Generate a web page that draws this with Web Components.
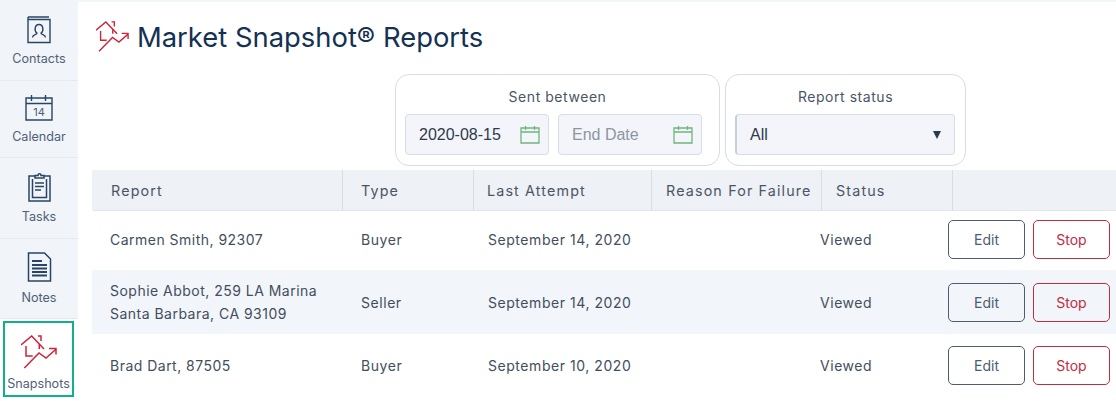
<!DOCTYPE html>
<html>
<head>
<meta charset="utf-8">
<title>Market Snapshot Reports</title>
<style>
    html, body { margin: 0; height: 401px; overflow: hidden; background: #fff; }
    body { font-family: Inter, "Liberation Sans", sans-serif; color: #2e3a4d; }
    #app { display: flex; height: 401px; border-top: 2px solid #f2f5fa; box-sizing: border-box; }
    #main { flex: 1; min-width: 0; padding-left: 14px; }
</style>
</head>
<body>
<div id="app">
    <side-nav>
        <nav-item label="Contacts" icon="contacts" height="79"></nav-item>
        <nav-item label="Calendar" icon="calendar" height="77" low></nav-item>
        <nav-item label="Tasks" icon="tasks" height="81"></nav-item>
        <nav-item label="Notes" icon="notes" height="80" low></nav-item>
        <nav-item label="Snapshots" icon="snapshots" active></nav-item>
    </side-nav>
    <div id="main">
        <page-title>Market Snapshot® Reports</page-title>
        <filter-bar>
            <filter-group label="Sent between" width="325">
                <date-field value="2020-08-15"></date-field>
                <date-field placeholder="End Date"></date-field>
            </filter-group>
            <filter-group label="Report status" width="241">
                <select-field value="All"></select-field>
            </filter-group>
        </filter-bar>
        <report-table>
            <report-row report="Carmen Smith, 92307" type="Buyer" attempt="September 14, 2020" status="Viewed" height="59"></report-row>
            <report-row report="Sophie Abbot, 259 LA Marina&#10;Santa Barbara, CA 93109" type="Seller" attempt="September 14, 2020" status="Viewed" height="64" shaded></report-row>
            <report-row report="Brad Dart, 87505" type="Buyer" attempt="September 10, 2020" status="Viewed" height="63"></report-row>
        </report-table>
    </div>
</div>

<script>
const ICONS = {
    contacts: `<svg width="26" height="28" viewBox="0 0 26 28" fill="none" stroke="#284566" stroke-width="1.4">
        <path d="M2 1h21M2 1v25.500h22V3.500H2"/>
        <path d="M6.500 21.500c0-3 4.500-2.500 4.500-4.500-3-2-2.500-8.500 2-8.500s5 6.500 2 8.500c0 2 4.500 1.500 4.500 4.500"/>
    </svg>`,
    calendar: `<svg width="28" height="27" viewBox="0 0 28 27" fill="none" stroke="#284566" stroke-width="1.4">
        <path d="M1 4h26v22H1zM1 9.500h26M6.500 1v6M20.500 1v6"/>
        <text x="14" y="22" font-family="Inter, sans-serif" font-size="11" fill="#4a5d75" stroke="none" text-anchor="middle">14</text>
    </svg>`,
    tasks: `<svg width="25" height="30" viewBox="0 0 25 30" fill="none" stroke="#284566" stroke-width="1.500">
        <path d="M8 4H2v25h21V4h-6"/>
        <path d="M8 6V3.500h3C11 1 14 1 14 3.500h3V6z"/>
        <path d="M5.500 7v18.500h14V7"/>
        <path d="M8 11h9M8 14.500h9M8 18h6"/>
    </svg>`,
    notes: `<svg width="25" height="30" viewBox="0 0 25 30" fill="none" stroke="#284566" stroke-width="1.500">
        <path d="M1.500 1h16l6 6v22h-22z"/>
        <path d="M5 9h10M5 13h15M5 16.500h15M5 20h15M5 23.500h15" stroke-width="1.800"/>
    </svg>`
};

const SNAPSHOT_ICON = size => `<svg width="${size}" height="${size}" viewBox="0 0 36 36" fill="none" stroke="#cf2338" stroke-width="1.500">
    <path d="M0 10 10.700 1 23 14"/>
    <path d="M17 1h3v5M5 11v10h6.700M18.300 9v5"/>
    <path d="M3.300 33 18 18l7 5 10-8.700M28 13.500h7v6"/>
</svg>`;

const navItemTemplate = document.createElement('template');
navItemTemplate.innerHTML = `
    <style>
        :host {
            display: flex;
            flex-direction: column;
            align-items: center;
            justify-content: flex-end;
            box-sizing: border-box;
            padding-bottom: 13px;
            background: #f1f4f9;
            border-bottom: 1px solid #e6eaf0;
            font-size: 12.600px;
            line-height: 16px;
            color: #4f6179;
        }
        #icon { display: flex; margin-bottom: 7px; }
        svg { display: block; }
        :host([low]) { padding-bottom: 12px; }
        :host([low]) #icon { margin-bottom: 8px; }
        :host([active]) {
            background: #fff;
            border: 2px solid #11b08a;
            margin: 2px 4px 0 3px;
            height: 76px;
            padding-bottom: 3px;
        }
        :host([active]) #icon { margin-bottom: 5px; }
    </style>
    <div id="icon"></div>
    <span id="label"></span>
`;

class NavItem extends HTMLElement {
    constructor() {
        super();
        const shadowRoot = this.attachShadow({mode: 'open'});
        shadowRoot.appendChild(navItemTemplate.content.cloneNode(true));
        const name = this.getAttribute('icon');
        shadowRoot.querySelector('#icon').innerHTML = name === 'snapshots' ? SNAPSHOT_ICON(36) : ICONS[name];
        shadowRoot.querySelector('#label').textContent = this.getAttribute('label');
        if (this.hasAttribute('height')) {
            this.style.height = this.getAttribute('height') + 'px';
        }
    }
}
customElements.define('nav-item', NavItem);

class SideNav extends HTMLElement {
    constructor() {
        super();
        this.attachShadow({mode: 'open'}).innerHTML = `
            <style>
                :host { display: flex; flex-direction: column; width: 78px; flex: none; }
            </style>
            <slot></slot>
        `;
    }
}
customElements.define('side-nav', SideNav);

class PageTitle extends HTMLElement {
    constructor() {
        super();
        this.attachShadow({mode: 'open'}).innerHTML = `
            <style>
                :host {
                    display: flex;
                    align-items: flex-start;
                    height: 72px;
                    box-sizing: border-box;
                    padding: 19px 0 0 4px;
                    gap: 8px;
                    font-size: 27.400px;
                    line-height: 32px;
                    color: #143154;
                }
                svg { display: block; }
            </style>
            ${SNAPSHOT_ICON(33)}
            <span><slot></slot></span>
        `;
    }
}
customElements.define('page-title', PageTitle);

class FilterBar extends HTMLElement {
    constructor() {
        super();
        this.attachShadow({mode: 'open'}).innerHTML = `
            <style>
                :host { display: flex; gap: 5px; padding-left: 303px; height: 96px; }
            </style>
            <slot></slot>
        `;
    }
}
customElements.define('filter-bar', FilterBar);

class FilterGroup extends HTMLElement {
    constructor() {
        super();
        const shadowRoot = this.attachShadow({mode: 'open'});
        shadowRoot.innerHTML = `
            <style>
                :host {
                    display: block;
                    box-sizing: border-box;
                    height: 92px;
                    padding: 13px 9px 0;
                    border: 1px solid #d5dde8;
                    border-radius: 14px;
                    font-size: 14px;
                    color: #4a5666;
                }
                #label { text-align: center; line-height: 17px; margin-bottom: 9px; letter-spacing: 0.550px; }
                #fields { display: flex; gap: 9px; }
            </style>
            <div id="label"></div>
            <div id="fields"><slot></slot></div>
        `;
        shadowRoot.querySelector('#label').textContent = this.getAttribute('label');
        this.style.width = this.getAttribute('width') + 'px';
    }
}
customElements.define('filter-group', FilterGroup);

class DateField extends HTMLElement {
    constructor() {
        super();
        const shadowRoot = this.attachShadow({mode: 'open'});
        shadowRoot.innerHTML = `
            <style>
                :host {
                    display: flex;
                    align-items: center;
                    justify-content: space-between;
                    box-sizing: border-box;
                    width: 144px;
                    height: 41px;
                    padding: 0 8px 0 13px;
                    background: #f3f5fa;
                    border: 1px solid #d5dde8;
                    border-radius: 4px;
                    font-family: "Liberation Sans", Arial, sans-serif;
                    font-size: 16px;
                    color: #2e3a4d;
                }
                #text.empty { color: #8d95a3; }
                svg { display: block; }
            </style>
            <span id="text"></span>
            <svg width="20" height="19" viewBox="0 0 20 19" fill="none" stroke="#6fb57c" stroke-width="1.300">
                <path d="M1 3h18v15H1zM1 7h18M5.500 1v4M14.500 1v4"/>
            </svg>
        `;
        const text = shadowRoot.querySelector('#text');
        if (this.hasAttribute('value')) {
            text.textContent = this.getAttribute('value');
        } else {
            text.textContent = this.getAttribute('placeholder');
            text.classList.add('empty');
        }
    }
}
customElements.define('date-field', DateField);

class SelectField extends HTMLElement {
    constructor() {
        super();
        const shadowRoot = this.attachShadow({mode: 'open'});
        shadowRoot.innerHTML = `
            <style>
                :host {
                    display: flex;
                    align-items: center;
                    justify-content: space-between;
                    box-sizing: border-box;
                    width: 220px;
                    height: 41px;
                    padding: 0 13px 0 13px;
                    background: #f3f5fa;
                    border: 1px solid #d5dde8;
                    border-left: 2px solid #c5d0de;
                    border-radius: 4px;
                    font-family: "Liberation Sans", Arial, sans-serif;
                    font-size: 16px;
                    color: #2e3a4d;
                }
                #arrow { width: 0; height: 0; border: 4.500px solid transparent; border-top: 8px solid #2b3a4e; border-bottom: 0; }
            </style>
            <span id="text"></span>
            <span id="arrow"></span>
        `;
        shadowRoot.querySelector('#text').textContent = this.getAttribute('value');
    }
}
customElements.define('select-field', SelectField);

const COLUMNS = '251px 131px 178px 170px 131px 1fr';

class ReportTable extends HTMLElement {
    constructor() {
        super();
        this.attachShadow({mode: 'open'}).innerHTML = `
            <style>
                :host { display: block; }
                #head {
                    display: grid;
                    grid-template-columns: ${COLUMNS};
                    height: 41px;
                    box-sizing: border-box;
                    background: #eef1f6;
                    border-bottom: 1px solid #dfe4ec;
                    border-radius: 2px 0 0 2px;
                    font-size: 14.300px;
                    letter-spacing: 1.150px;
                    color: #4a5666;
                }
                #head div {
                    display: flex;
                    align-items: center;
                    border-right: 1px solid #d5dde8;
                    padding-left: 19px;
                    padding-top: 1px;
                    white-space: nowrap;
                }
                #head div:nth-child(2) { padding-left: 18px; }
                #head div:nth-child(3) { padding-left: 13px; }
                #head div:nth-child(4), #head div:nth-child(5) { padding-left: 14px; }
                #head div:last-child { border-right: 0; }
            </style>
            <div id="head">
                <div>Report</div><div>Type</div><div>Last Attempt</div><div>Reason For Failure</div><div>Status</div><div></div>
            </div>
            <slot></slot>
        `;
    }
}
customElements.define('report-table', ReportTable);

const reportRowTemplate = document.createElement('template');
reportRowTemplate.innerHTML = `
    <style>
        :host {
            display: grid;
            grid-template-columns: ${COLUMNS};
            align-items: center;
            box-sizing: border-box;
            padding-bottom: 1px;
            font-size: 14px;
            letter-spacing: 0.550px;
            color: #424e5e;
        }
        :host(:first-of-type) { padding-bottom: 2px; }
        :host([shaded]) { background: #f2f5fa; padding: 1px 0 0; }
        :host([shaded]) #report { margin-top: -2px; }
        #report { padding-left: 18px; white-space: pre-line; line-height: 23px; letter-spacing: 0.480px; }
        #type { padding-left: 18px; }
        #attempt { padding-left: 14px; white-space: nowrap; }
        #status { grid-column: 5; white-space: nowrap; margin-left: -2px; }
        #actions { display: flex; gap: 8px; margin-left: -5px; }
    </style>
    <div id="report"></div>
    <div id="type"></div>
    <div id="attempt"></div>
    <div id="status"></div>
    <div id="actions">
        <action-button>Edit</action-button>
        <action-button danger>Stop</action-button>
    </div>
`;

class ReportRow extends HTMLElement {
    constructor() {
        super();
        const shadowRoot = this.attachShadow({mode: 'open'});
        shadowRoot.appendChild(reportRowTemplate.content.cloneNode(true));
        for (const name of ['report', 'type', 'attempt', 'status']) {
            shadowRoot.querySelector('#' + name).textContent = this.getAttribute(name);
        }
        this.style.height = this.getAttribute('height') + 'px';
    }
}
customElements.define('report-row', ReportRow);

class ActionButton extends HTMLElement {
    constructor() {
        super();
        this.attachShadow({mode: 'open'}).innerHTML = `
            <style>
                :host {
                    display: flex;
                    align-items: center;
                    justify-content: center;
                    box-sizing: border-box;
                    width: 77px;
                    height: 39px;
                    border: 1px solid #4d5c70;
                    border-radius: 5px;
                    font-size: 14px;
                    letter-spacing: 0;
                    color: #4d5c70;
                }
                :host([danger]) { border-color: #c12c3f; color: #c12c3f; }
            </style>
            <slot></slot>
        `;
    }
}
customElements.define('action-button', ActionButton);
</script>
</body>
</html>
